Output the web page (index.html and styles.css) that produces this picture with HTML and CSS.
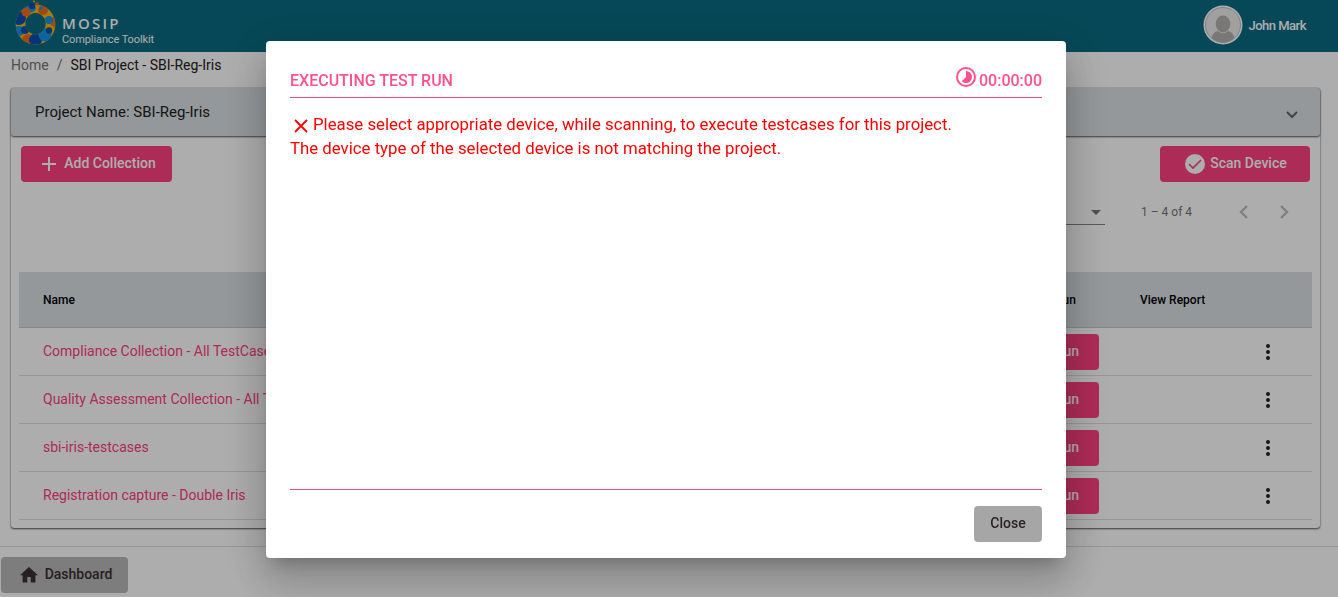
FILE: index.html
```html
<!DOCTYPE html>
<html lang="en">
<head>
<meta charset="utf-8">
<title>Compliance Toolkit</title>
<link rel="stylesheet" href="styles.css">
</head>
<body>
<header class="topbar">
  <div class="brand">
    <svg class="logo" width="42" height="46" viewBox="0 0 42 46">
      <defs><clipPath id="ring"><path clip-rule="evenodd" d="M20.5 4.5a19.8 20 0 1 0 .01 0zM20.5 13a10.2 10.7 0 1 1-.01 0z"/></clipPath></defs>
      <g clip-path="url(#ring)">
        <rect width="42" height="46" fill="#f5b800"/>
        <ellipse cx="13" cy="8" rx="8" ry="5" fill="#2196e0"/>
        <circle cx="4" cy="18" r="7" fill="#0b4db0"/>
        <circle cx="11" cy="12" r="4.500" fill="#f26a1b"/>
        <circle cx="4" cy="31" r="5" fill="#1593e6"/>
        <circle cx="10" cy="30" r="4" fill="#0b4db0"/>
        <circle cx="13" cy="40" r="6" fill="#f26a1b"/>
        <circle cx="20.500" cy="40" r="6.500" fill="#0b4db0"/>
        <circle cx="30" cy="35" r="6.500" fill="#1593e6"/>
        <circle cx="34" cy="30.500" r="3.200" fill="#0b4db0"/>
        <circle cx="40" cy="22" r="5" fill="#f26a1b"/>
        <circle cx="34" cy="20" r="4" fill="#1593e6"/>
        <circle cx="28" cy="10" r="5" fill="#f26a1b"/>
      </g>
      <circle cx="17" cy="6" r="3.200" fill="#0b4db0"/>
      <circle cx="22" cy="4" r="1.800" fill="#f26a1b"/>
      <circle cx="26" cy="8" r="1.800" fill="#1593e6"/>
      <circle cx="19" cy="1.500" r="1" fill="#f5b800"/>
    </svg>
    <div class="brand-text">
      <span class="brand-name">MOSIP</span>
      <span class="brand-sub">Compliance Toolkit</span>
    </div>
  </div>
  <div class="user">
    <svg width="40" height="40" viewBox="0 0 40 40">
      <defs><clipPath id="face"><circle cx="20" cy="20" r="17.200"/></clipPath></defs>
      <circle cx="20" cy="20" r="19.500" fill="#fff"/>
      <circle cx="20" cy="20" r="17.500" fill="#ececec" stroke="#a3acb0" stroke-width=".7"/>
      <g clip-path="url(#face)" fill="#b3b1ae"><ellipse cx="20" cy="19" rx="7.300" ry="8.500"/><path d="M8 39c0-9 3-12 7-13 3 3 7 3 10 0 4 1 7 4 7 13z"/></g>
    </svg>
    <span>John Mark</span>
  </div>
</header>
<nav class="crumbs"><span class="crumb-link">Home</span><span class="crumb-sep">/</span><span>SBI Project - SBI-Reg-Iris</span></nav>
<main class="card">
  <section class="project"><span>Project Name: SBI-Reg-Iris</span>
    <svg width="12" height="8" viewBox="0 0 12 8"><path d="M1 1l5 5 5-5" fill="none" stroke="#666" stroke-width="2"/></svg>
  </section>
  <div class="actions">
    <button class="btn add"><svg width="14" height="14" viewBox="0 0 14 14"><path d="M7 0v14M0 7h14" stroke="#fff" stroke-width="2"/></svg><span>Add Collection</span></button>
    <button class="btn scan"><svg width="20" height="20" viewBox="0 0 20 20"><circle cx="10" cy="10" r="10" fill="#fff"/><path d="M4 10l4 4 8-8" fill="none" stroke="#ff4081" stroke-width="1.600"/></svg><span>Scan Device</span></button>
  </div>
  <div class="paginator">
    <div class="select"><svg width="10" height="5" viewBox="0 0 10 5"><path d="M0 0h10L5 5z" fill="#757575"/></svg></div>
    <span class="range">1 – 4 of 4</span>
    <svg class="prev" width="9" height="14" viewBox="0 0 9 14"><path d="M8 1L2 7l6 6" fill="none" stroke="#bdbdbd" stroke-width="2.300"/></svg>
    <svg width="9" height="14" viewBox="0 0 9 14"><path d="M1 1l6 6-6 6" fill="none" stroke="#bdbdbd" stroke-width="2.300"/></svg>
  </div>
  <div class="table">
    <div class="row head"><span>Name</span><span class="run-head">Run</span><span>View Report</span></div>
    <div class="row"><span class="link">Compliance Collection - All TestCases</span><button class="btn run"><span>Run</span></button><span></span><i class="dots"></i></div>
    <div class="row"><span class="link">Quality Assessment Collection - All TestCases</span><button class="btn run"><span>Run</span></button><span></span><i class="dots"></i></div>
    <div class="row"><span class="link">sbi-iris-testcases</span><button class="btn run"><span>Run</span></button><span></span><i class="dots"></i></div>
    <div class="row"><span class="link">Registration capture - Double Iris</span><button class="btn run"><span>Run</span></button><span></span><i class="dots"></i></div>
  </div>
</main>
<footer class="footer">
  <button class="btn dashboard"><svg width="18" height="16" viewBox="0 0 18 16"><path d="M9 0L0 8.300h2.600V15.500h4.700V10h3.400v5.500h4.700V8.300H18z" fill="#3a2f32"/></svg><span>Dashboard</span></button>
</footer>
<div class="backdrop">
  <div class="dialog" role="dialog">
    <div class="dialog-head"><h1>EXECUTING TEST RUN</h1>
      <div class="timer"><svg width="20" height="20" viewBox="0 0 20 20"><circle cx="10" cy="10" r="9" fill="none" stroke="#ff528d" stroke-width="2"/><path d="M10 4a6 6 0 1 1-4.240 10.240L10 10z" fill="#ff528d"/></svg><span>00:00:00</span></div>
    </div>
    <div class="dialog-body">
      <p><svg class="cross" width="14" height="14" viewBox="0 0 14 14"><path d="M1 1l12 12M13 1L1 13" stroke="#f00" stroke-width="1.800"/></svg>Please select appropriate device, while scanning, to execute testcases for this project.</p>
      <p>The device type of the selected device is not matching the project.</p>
    </div>
    <div class="dialog-foot"><button class="btn close"><span>Close</span></button></div>
  </div>
</div>
</body>
</html>
```
FILE: styles.css
```css
* { box-sizing: border-box; }
body { margin: 0; height: 597px; overflow: hidden; background: #fff; font: 14px Roboto, sans-serif; color: #212121; }
svg { display: block; flex: none; }
.topbar { height: 52px; background: #096b81; display: flex; justify-content: space-between; padding: 0 32px 0 15px; color: #fff; }
.brand { display: flex; }
.brand-text { display: flex; flex-direction: column; padding: 15px 0 0 5px; }
.brand-name { font: 600 15px/17px "Open Sans", sans-serif; letter-spacing: 2.2px; }
.brand-sub { font-size: 11px; line-height: 16px; letter-spacing: -.1px; }
.user { display: flex; gap: 5px; padding-top: 5px; font-size: 13px; font-weight: 500; line-height: 41px; letter-spacing: -.5px; }
.crumbs { display: flex; height: 36px; padding-left: 11px; line-height: 27px; color: #212121; }
.crumb-link, .crumb-sep { color: #757575; }
.crumb-sep { margin: 0 8px; }
.card { margin: 0 18px 0 11px; height: 440px; border-radius: 3px; box-shadow: 0 1px 2px #555, 0 0 1px #777; }
.project { height: 48px; display: flex; align-items: center; justify-content: space-between; background: #dae0e4; border-radius: 3px; padding: 0 22px 0 24px; box-shadow: 0 1px 2px #555; font-size: 15px; }
.project svg { margin-top: 6px; }
.actions { display: flex; justify-content: space-between; padding: 10px 10px 0; }
.btn { height: 36px; border: 0; border-radius: 4px; padding: 0; display: flex; align-items: center; justify-content: center; background: #ff4081; color: #fff; font: 500 14px Roboto, sans-serif; }
.btn span { padding-bottom: 2px; }
.add { width: 151px; gap: 8px; padding-left: 5px; }
.scan { width: 150px; gap: 5px; padding-left: 2px; }
.paginator { height: 90px; padding: 18px 31px 0 0; display: flex; justify-content: flex-end; }
.paginator > svg { margin-top: 5px; }
.select { width: 56px; height: 25px; margin-right: 36px; border-bottom: 1px solid #858585; display: flex; align-items: center; justify-content: flex-end; padding-right: 4px; }
.range { width: 98px; font-size: 12px; line-height: 24px; color: #757575; }
.paginator > .prev { margin-right: 32px; }
.table { margin: 0 8px; }
.row { height: 48px; display: grid; grid-template-columns: 965px 132px 126px 1fr; align-items: center; padding-left: 24px; border-bottom: 1px solid #dedede; }
.head { height: 56px; background: #dae0e4; font-size: 12px; font-weight: 500; color: #000; border-color: #c4c8cb; }
.run-head { padding-left: 47px; }
.link { color: #ff4081; padding-bottom: 2px; }
.run { width: 91px; justify-content: flex-end; padding-right: 20px; }
.dots { width: 4px; height: 4px; border-radius: 50%; background: #212121; box-shadow: 0 -6px #212121, 0 6px #212121; }
.footer { margin-top: 18px; border-top: 1px solid #dedede; padding: 10px 0 0 1px; }
.dashboard { width: 127px; gap: 7px; padding-left: 3px; background: #b8b8b8; color: #3a2f32; }
.backdrop { position: fixed; inset: 0; background: rgba(0,0,0,.32); display: flex; justify-content: flex-start; align-items: flex-start; padding: 41px 0 0 266px; }
.dialog { width: 800px; height: 517px; background: #fff; border-radius: 4px; padding: 24px; box-shadow: 0 11px 15px -7px rgba(0,0,0,.2), 0 24px 38px 3px rgba(0,0,0,.14), 0 9px 46px 8px rgba(0,0,0,.12); }
.dialog-head { height: 33px; display: flex; justify-content: space-between; border-bottom: 1px solid #ee4b86; color: #ff528d; font-size: 16px; font-weight: 500; line-height: 31px; }
.dialog-head h1 { margin: 0; font: inherit; }
.timer { display: flex; gap: 3px; }
.timer svg { margin-top: 2px; }
.dialog-body { height: 392px; border-bottom: 1px solid #ee4b86; padding-top: 14px; color: #f00; font-size: 16.8px; line-height: 24px; }
.dialog-body p { margin: 0; display: flex; align-items: center; }
.cross { margin: 4px 5px 0 4px; }
.dialog-foot { display: flex; justify-content: flex-end; padding-top: 16px; }
.close { width: 68px; background: #a6a6a6; color: #2b2226; }
```
